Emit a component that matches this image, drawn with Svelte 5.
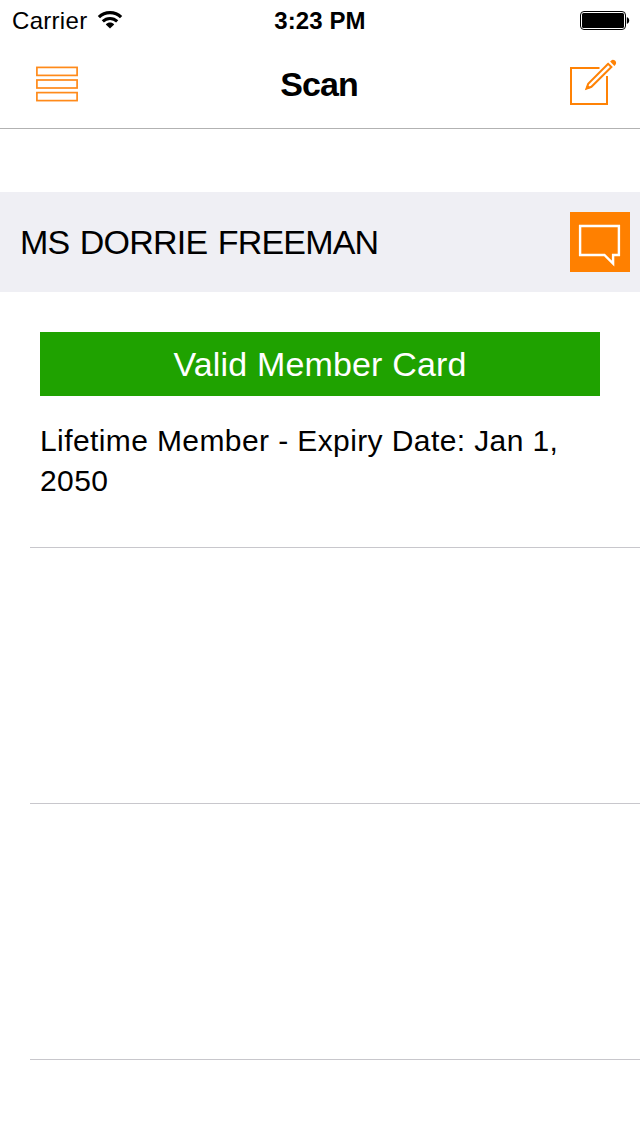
<script lang="ts">
  const carrier = 'Carrier';
  const time = '3:23 PM';

  const member = {
    name: 'MS DORRIE FREEMAN',
    status: 'Valid Member Card',
    details: 'Lifetime Member - Expiry Date: Jan 1, 2050'
  };

  const emptyRows = [1, 2];
</script>

<div class="screen">
  <header>
    <div class="status-bar">
      <div class="network">
        <span class="carrier">{carrier}</span>
        <svg class="wifi" width="26" height="20" viewBox="0 0 26 20" fill="none" stroke="#000">
          <path d="M1.9 7.2C8 1.2 18 1.2 24.1 7.2" stroke-width="3.2" />
          <path d="M5.8 11.4C9.8 7.4 16.2 7.4 20.2 11.4" stroke-width="3" />
          <path d="M8.8 14.4c2.3-2.4 6.1-2.4 8.4 0L13 18.6z" fill="#000" stroke="none" />
        </svg>
      </div>
      <span class="time">{time}</span>
      <svg class="battery" width="50" height="20" viewBox="0 0 50 20">
        <rect x="0.5" y="0.5" width="45" height="18" rx="3.5" fill="none" stroke="#000" />
        <rect x="2" y="2" width="42" height="15" rx="1.5" />
        <path d="M46.8 6.3c1.4 0 2.4 1.4 2.4 3.2s-1 3.2-2.4 3.2z" />
      </svg>
    </div>

    <nav>
      <button class="icon-btn menu" aria-label="Menu">
        <svg width="42" height="36" viewBox="0 0 42 36" fill="none" stroke="#ff8a1a" stroke-width="1.7">
          <rect x="0.9" y="1.4" width="40.2" height="8" />
          <rect x="0.9" y="14" width="40.2" height="8" />
          <rect x="0.9" y="26.6" width="40.2" height="8" />
        </svg>
      </button>
      <h1>Scan</h1>
      <button class="icon-btn compose" aria-label="Compose">
        <svg width="48" height="48" viewBox="0 0 48 48" fill="none" stroke="#ff8205">
          <path d="M29.5 10H1v36h36V18" stroke-width="2" />
          <path d="M38.2 5.8L18.2 25.8l-1.7 4.7 4.9-1.7L41.4 9z" fill="#fff" stroke-width="2" />
          <path d="M15.6 31.6l1.7-5 3.3 3.3z" fill="#ff8205" stroke="none" />
          <path d="M40.1 3.6l.9-.9c2.7-2.7 7 1.5 4.3 4.3l-.9.9z" fill="#ff8205" stroke="none" />
        </svg>
      </button>
    </nav>
  </header>

  <main>
    <section class="member">
      <h2>{member.name}</h2>
      <button class="icon-btn message" aria-label="Message">
        <svg width="60" height="60" viewBox="0 0 60 60" fill="none" stroke="#fff" stroke-width="2.4">
          <path d="M10.1 14h38.8v29h-5.8v8.6L34.4 43H10.1z" />
        </svg>
      </button>
    </section>

    <div class="row card">
      <div class="badge"><span>{member.status}</span></div>
      <p>{member.details}</p>
    </div>
    {#each emptyRows as row (row)}
      <div class="row"></div>
    {/each}
  </main>
</div>

<style>
  :global(body) {
    background: #fff;
  }

  .screen {
    width: 640px;
    height: 1136px;
    overflow: hidden;
    background: #fff;
    color: #000;
    font-family: "Liberation Sans", Arial, sans-serif;
  }

  svg {
    display: block;
  }

  h1,
  h2,
  p {
    margin: 0;
  }

  header {
    box-sizing: border-box;
    height: 129px;
    border-bottom: 1px solid #b2b2b2;
  }

  .status-bar {
    display: grid;
    grid-template-columns: 1fr auto 1fr;
    height: 40px;
    padding: 0 10px 0 12px;
    font-size: 24px;
    line-height: 41px;
  }

  .network {
    display: flex;
    gap: 10px;
  }

  .carrier {
    letter-spacing: 0.3px;
  }

  .wifi {
    margin-top: 10px;
  }

  .time {
    margin-right: 2px;
    font-weight: bold;
    letter-spacing: 0.1px;
  }

  .battery {
    justify-self: end;
    margin-top: 11px;
  }

  nav {
    display: grid;
    grid-template-columns: 1fr auto 1fr;
    height: 88px;
    padding: 0 23px 0 21px;
  }

  h1 {
    font-size: 34px;
    font-weight: bold;
    line-height: 89px;
    letter-spacing: -0.9px;
  }

  .icon-btn {
    padding: 0;
    border: 0;
    background: none;
  }

  .menu {
    align-self: start;
    justify-self: start;
    margin: 26px 0 0 15px;
  }

  .compose {
    align-self: start;
    justify-self: end;
    margin: 18px -1px 0 0;
  }

  .member {
    display: flex;
    align-items: center;
    justify-content: space-between;
    height: 100px;
    margin-top: 63px;
    padding: 0 10px 0 20px;
    background: #efeff4;
  }

  h2 {
    font-size: 34px;
    font-weight: normal;
    line-height: 100px;
    letter-spacing: -0.8px;
    word-spacing: 1.8px;
  }

  .message {
    background: #ff8000;
  }

  .row {
    box-sizing: border-box;
    height: 256px;
    margin-left: 30px;
    border-bottom: 1px solid #c8c7cc;
  }

  .card {
    padding: 40px 40px 0 10px;
  }

  .badge {
    height: 64px;
    background: #1fa200;
    color: #fff;
    font-size: 34px;
    line-height: 64px;
    letter-spacing: 0.16px;
    text-align: center;
  }

  p {
    margin-top: 25px;
    font-size: 30px;
    line-height: 40px;
    letter-spacing: 0.4px;
  }
</style>
